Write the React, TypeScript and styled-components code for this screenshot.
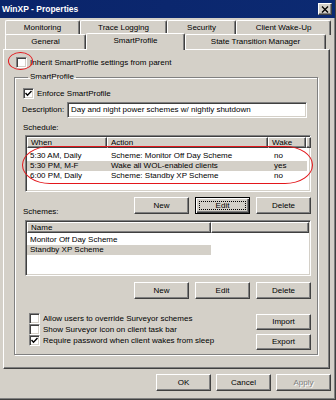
import styled, { createGlobalStyle, css } from 'styled-components';

const GlobalStyle = createGlobalStyle`
  html, body {
    margin: 0;
    padding: 0;
    background: #d4d0c8;
  }
  body {
    font-family: "Liberation Sans", Arial, sans-serif;
    font-size: 8px;
    color: #000;
  }
  * { box-sizing: border-box; }
`;

const raised = css`
  border: 1px solid;
  border-color: #fff #404040 #404040 #fff;
  box-shadow: inset -1px -1px 0 #808080;
`;

const sunken = css`
  border: 1px solid;
  border-color: #808080 #fff #fff #808080;
  box-shadow: inset 1px 1px 0 #404040, inset -1px -1px 0 #d4d0c8;
`;

const Window = styled.div`
  position: relative;
  width: 336px;
  height: 400px;
  background: #d4d0c8;
  border-right: 1px solid #404040;
  border-bottom: 1px solid #404040;
  box-shadow: inset -1px -1px 0 #808080;
  display: flex;
  flex-direction: column;
  overflow: hidden;
`;

const TitleBar = styled.div`
  height: 18px;
  background: linear-gradient(90deg, #0a246a, #0c2a72);
  display: flex;
  align-items: center;
  justify-content: space-between;
  padding: 0 3px 0 2px;
`;

const Title = styled.span`
  color: #fff;
  font-weight: bold;
  font-size: 8.5px;
`;

const CloseButton = styled.div`
  ${raised};
  width: 14px;
  height: 12px;
  background: #d4d0c8;
  display: flex;
  align-items: center;
  justify-content: center;
`;

const TabStrip = styled.div`
  margin: 3px 0 0 5px;
  display: flex;
  flex-direction: column;
`;

const TabRow = styled.div<{ $front?: boolean }>`
  display: flex;
  align-items: flex-end;
  height: ${p => (p.$front ? 15 : 14)}px;
  margin-top: ${p => (p.$front ? -1 : 0)}px;
  position: relative;
  z-index: ${p => (p.$front ? 2 : 1)};
`;

const Tab = styled.div<{ $w: number; $active?: boolean }>`
  width: ${p => p.$w}px;
  height: ${p => (p.$active ? 17 : 15)}px;
  margin-bottom: ${p => (p.$active ? -1 : 0)}px;
  background: #d4d0c8;
  border-top: 1px solid #fff;
  border-left: 1px solid #fff;
  border-right: 1px solid #404040;
  box-shadow: inset -1px 0 0 #808080;
  border-top-left-radius: 2px;
  border-top-right-radius: 2px;
  display: flex;
  justify-content: center;
  padding-top: 2px;
  line-height: 10px;
  position: relative;
  z-index: ${p => (p.$active ? 3 : 1)};
`;

const Panel = styled.div`
  margin-left: 3px;
  width: 327px;
  height: 320px;
  border: 1px solid;
  border-color: #fff #404040 #404040 #fff;
  box-shadow: inset -1px -1px 0 #808080;
  padding-top: 7px;
  display: flex;
  flex-direction: column;
  position: relative;
  z-index: 1;
`;

const CheckRow = styled.div<{ $indent?: number; $top?: number }>`
  display: flex;
  align-items: center;
  gap: 3px;
  height: 11px;
  margin-left: ${p => p.$indent ?? 0}px;
  margin-top: ${p => p.$top ?? 0}px;
  line-height: 10px;
`;

const Box = styled.div`
  ${sunken};
  width: 11px;
  height: 11px;
  background: #fff;
  display: flex;
  align-items: center;
  justify-content: center;
  flex-shrink: 0;
`;

const Group = styled.fieldset`
  margin: 4px 0 0 10px;
  width: 304px;
  padding: 0 6px 4px 8px;
  border: 1px solid #808080;
  box-shadow: inset 1px 1px 0 #fff, 1px 1px 0 #fff;
  min-inline-size: 0;
  display: flex;
  flex-direction: column;
`;

const Legend = styled.legend`
  padding: 0 2px;
  margin-left: 5px;
  line-height: 10px;
`;

const DescRow = styled.div`
  display: flex;
  align-items: center;
  margin-top: 3px;
  height: 16px;
`;

const Label = styled.span<{ $w?: number }>`
  line-height: 10px;
  width: ${p => (p.$w ? `${p.$w}px` : 'auto')};
  margin-left: -1px;
`;

const TextInput = styled.div`
  ${sunken};
  width: 240px;
  height: 16px;
  background: #fff;
  padding: 2px 0 0 3px;
  line-height: 10px;
  white-space: nowrap;
`;

const SectionLabel = styled.div<{ $top: number }>`
  margin-top: ${p => p.$top}px;
  line-height: 10px;
`;

const List = styled.div<{ $top: number; $h: number }>`
  ${sunken};
  margin: ${p => p.$top}px 0 0 2px;
  width: 286px;
  height: ${p => p.$h}px;
  background: #fff;
  padding: 1px;
  display: flex;
  flex-direction: column;
`;

const HeaderRow = styled.div`
  display: flex;
  height: 11px;
  flex-shrink: 0;
`;

const HeaderCell = styled.div<{ $w: number; $flex?: boolean }>`
  ${raised};
  background: #d4d0c8;
  width: ${p => p.$w}px;
  flex: ${p => (p.$flex ? 1 : 'none')};
  padding-left: 3px;
  line-height: 9px;
  white-space: nowrap;
`;

const Rows = styled.div<{ $top: number }>`
  padding-top: ${p => p.$top}px;
  display: flex;
  flex-direction: column;
`;

const Row = styled.div`
  display: flex;
  height: 10px;
  line-height: 10px;
  white-space: nowrap;
`;

const Cell = styled.div<{ $w: number; $selected?: boolean; $pad?: number }>`
  width: ${p => p.$w}px;
  padding-left: ${p => p.$pad ?? 3}px;
  background: ${p => (p.$selected ? '#d4d0c8' : 'transparent')};
`;

const ButtonRow = styled.div<{ $top: number }>`
  display: flex;
  justify-content: flex-end;
  align-items: flex-end;
  gap: 6px;
  margin-top: ${p => p.$top}px;
  height: 17px;
`;

const RowLabel = styled.span`
  margin-right: auto;
  margin-bottom: -3px;
  line-height: 10px;
`;

const Button = styled.div<{ $focused?: boolean; $disabled?: boolean; $h?: number }>`
  ${raised};
  width: 55px;
  height: ${p => p.$h ?? 17}px;
  background: #d4d0c8;
  display: flex;
  align-items: center;
  justify-content: center;
  line-height: 10px;
  color: ${p => (p.$disabled ? '#808080' : '#000')};
  text-shadow: ${p => (p.$disabled ? '1px 1px 0 #fff' : 'none')};
  ${p =>
    p.$focused &&
    css`
      border-color: #000;
      box-shadow: inset 1px 1px 0 #fff, inset -1px -1px 0 #404040, inset -2px -2px 0 #808080;
      outline: 1px dotted #000;
      outline-offset: -5px;
    `}
`;

const BottomSection = styled.div`
  display: flex;
  justify-content: space-between;
  margin-top: 14px;
`;

const CheckColumn = styled.div`
  display: flex;
  flex-direction: column;
  margin-left: 6px;
`;

const SideButtons = styled.div`
  display: flex;
  flex-direction: column;
  gap: 4px;
  padding-top: 1px;
`;

const DialogButtons = styled.div`
  display: flex;
  justify-content: flex-end;
  gap: 5px;
  margin: 5px 4px 0 0;
`;

const Annotation = styled.div<{ $x: number; $y: number; $w: number; $h: number; $r: string }>`
  position: absolute;
  left: ${p => p.$x}px;
  top: ${p => p.$y}px;
  width: ${p => p.$w}px;
  height: ${p => p.$h}px;
  border: 1.5px solid #e3161b;
  border-radius: ${p => p.$r};
  pointer-events: none;
  z-index: 10;
`;

const Check = () => (
  <svg width="7" height="7" viewBox="0 0 7 7">
    <path d="M0.5 3 L2.5 5.2 L6.5 1" fill="none" stroke="#000" strokeWidth="1.4" />
  </svg>
);

const CheckBox = ({ checked }: { checked?: boolean }) => <Box>{checked && <Check />}</Box>;

const schedule = [
  { when: '5:30 AM, Daily', action: 'Scheme: Monitor Off Day Scheme', wake: 'no' },
  { when: '5:30 PM, M-F', action: 'Wake all WOL-enabled clients', wake: 'yes', selected: true },
  { when: '6:00 PM, Daily', action: 'Scheme: Standby XP Scheme', wake: 'no' },
];

const schemes = [
  { name: 'Monitor Off Day Scheme' },
  { name: 'Standby XP Scheme', selected: true },
];

export default function App() {
  return (
    <>
      <GlobalStyle />
      <Window>
        <TitleBar>
          <Title>WinXP - Properties</Title>
          <CloseButton>
            <svg width="8" height="7" viewBox="0 0 8 7">
              <path d="M1 0.5 L7 6.5 M7 0.5 L1 6.5" stroke="#000" strokeWidth="1.3" />
            </svg>
          </CloseButton>
        </TitleBar>

        <TabStrip>
          <TabRow>
            <Tab $w={75}>Monitoring</Tab>
            <Tab $w={87}>Trace Logging</Tab>
            <Tab $w={69}>Security</Tab>
            <Tab $w={95}>Client Wake-Up</Tab>
          </TabRow>
          <TabRow $front>
            <Tab $w={81}>General</Tab>
            <Tab $w={99} $active>SmartProfile</Tab>
            <Tab $w={141}>State Transition Manager</Tab>
          </TabRow>
        </TabStrip>

        <Panel>
          <CheckRow $indent={12}>
            <CheckBox />
            <span>Inherit SmartProfile settings from parent</span>
          </CheckRow>

          <Group>
            <Legend>SmartProfile</Legend>
            <CheckRow $top={6}>
              <CheckBox checked />
              <span>Enforce SmartProfile</span>
            </CheckRow>
            <DescRow>
              <Label $w={45}>Description:</Label>
              <TextInput>Day and night power schemes w/ nightly shutdown</TextInput>
            </DescRow>

            <SectionLabel $top={5}>Schedule:</SectionLabel>
            <List $top={2} $h={57}>
              <HeaderRow>
                <HeaderCell $w={80}>When</HeaderCell>
                <HeaderCell $w={161}>Action</HeaderCell>
                <HeaderCell $w={38}>Wake</HeaderCell>
                <HeaderCell $w={3} $flex />
              </HeaderRow>
              <Rows $top={3}>
                {schedule.map(s => (
                  <Row key={s.when}>
                    <Cell $w={80} $selected={s.selected}>{s.when}</Cell>
                    <Cell $w={161} $selected={s.selected} $pad={4}>{s.action}</Cell>
                    <Cell $w={39} $selected={s.selected} $pad={6}>{s.wake}</Cell>
                  </Row>
                ))}
              </Rows>
            </List>
            <ButtonRow $top={5}>
              <RowLabel>Schemes:</RowLabel>
              <Button>New</Button>
              <Button $focused>Edit</Button>
              <Button>Delete</Button>
            </ButtonRow>

            <List $top={6} $h={56}>
              <HeaderRow>
                <HeaderCell $w={184}>Name</HeaderCell>
                <HeaderCell $w={98} $flex />
              </HeaderRow>
              <Rows $top={2}>
                {schemes.map(s => (
                  <Row key={s.name}>
                    <Cell $w={184} $selected={s.selected}>{s.name}</Cell>
                  </Row>
                ))}
              </Rows>
            </List>
            <ButtonRow $top={6}>
              <Button>New</Button>
              <Button>Edit</Button>
              <Button>Delete</Button>
            </ButtonRow>

            <BottomSection>
              <CheckColumn>
                <CheckRow>
                  <CheckBox />
                  <span>Allow users to override Surveyor schemes</span>
                </CheckRow>
                <CheckRow>
                  <CheckBox />
                  <span>Show Surveyor icon on client task bar</span>
                </CheckRow>
                <CheckRow>
                  <CheckBox checked />
                  <span>Require password when client wakes from sleep</span>
                </CheckRow>
              </CheckColumn>
              <SideButtons>
                <Button $h={16}>Import</Button>
                <Button $h={16}>Export</Button>
              </SideButtons>
            </BottomSection>
          </Group>
        </Panel>

        <DialogButtons>
          <Button>OK</Button>
          <Button>Cancel</Button>
          <Button $disabled>Apply</Button>
        </DialogButtons>

        <Annotation $x={8} $y={52} $w={25} $h={18} $r="50%" />
        <Annotation $x={22} $y={146} $w={291} $h={38} $r="28px / 19px" />
      </Window>
    </>
  );
}
